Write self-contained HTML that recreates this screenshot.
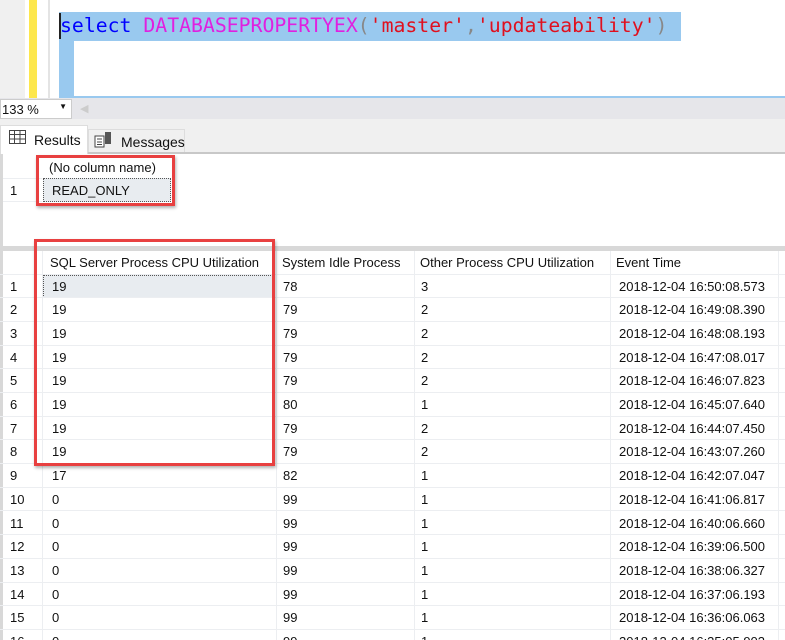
<!DOCTYPE html>
<html><head><style>
*{margin:0;padding:0;box-sizing:border-box}
html,body{width:785px;height:640px;overflow:hidden}
body{background:#fff;position:relative;font-family:"Liberation Sans",sans-serif;font-size:13px;color:#111}
.a{position:absolute}
.code{font-family:"DejaVu Sans Mono","Liberation Mono",monospace;font-size:19.8px;white-space:pre}
.row{position:absolute;left:0;width:785px;height:23.7px;border-bottom:1px solid #eceef1}
.c{position:absolute;top:4px;white-space:nowrap}
.vl{position:absolute;width:1px;background:#eceef1}
</style></head><body>
<div class="a" style="left:0;top:0;width:25px;height:98px;background:#f0f0f0"></div>
<div class="a" style="left:29px;top:0;width:8px;height:98px;background:#fde74c"></div>
<div class="a" style="left:48px;top:0;width:2px;height:98px;background:#e4e4e4"></div>
<div class="a" style="left:59px;top:12px;width:622px;height:29px;background:#99c9ef"></div>
<div class="a" style="left:59px;top:41px;width:15px;height:57px;background:#99c9ef"></div>
<div class="a" style="left:59px;top:96px;width:726px;height:2px;background:#99c9ef"></div>
<div class="a" style="left:59px;top:13px;width:2px;height:26px;background:#222"></div>
<div class="a code" style="left:60px;top:14px;color:#00f">select <span style="color:#e020e0">DATABASEPROPERTYEX</span><span style="color:#888">(</span><span style="color:#e0101e">'master'</span><span style="color:#888">,</span><span style="color:#e0101e">'updateability'</span><span style="color:#888">)</span></div>
<div class="a" style="left:0;top:98px;width:785px;height:21px;background:#e6e6ea"></div>
<div class="a" style="left:0;top:99px;width:72px;height:20px;background:#fff;border:1px solid #ccc;font-size:13px;padding:2px 0 0 1px">133 %<span style="position:absolute;right:4px;top:2px;font-size:8px">▼</span></div>
<div class="a" style="left:80px;top:102px;color:#ccc;font-size:11px">◀</div>
<div class="a" style="left:0;top:119px;width:785px;height:35px;background:#f0f0f0"></div>
<div class="a" style="left:0;top:152px;width:785px;height:2px;background:#c8c8c8"></div>
<div class="a" style="left:0;top:125px;width:88px;height:29px;background:#fff;border:1px solid #ddd;border-bottom:none"></div>
<svg class="a" style="left:9px;top:130px" width="17" height="14"><rect x="0.5" y="0.5" width="16" height="13" fill="#fff" stroke="#444"/><path d="M0 4.5H17M0 9H17M5.5 0V14M11 0V14" stroke="#444"/></svg>
<div class="a" style="left:34px;top:132px;font-size:14px">Results</div>
<div class="a" style="left:88px;top:129px;width:97px;height:23px;background:#f0f0f0;border:1px solid #ddd;border-bottom:none"></div>
<svg class="a" style="left:94px;top:131px" width="18" height="17"><rect x="1" y="5" width="9" height="11" fill="#fff" stroke="#444"/><path d="M3 8H8M3 11H8M3 13.5H8" stroke="#444"/><rect x="11" y="1" width="6" height="12" fill="#555"/></svg>
<div class="a" style="left:121px;top:134px;font-size:14px">Messages</div>
<div class="a" style="left:0;top:154px;width:785px;height:92px;background:#fff;border-left:3px solid #d8d8d8"></div>
<div class="a" style="left:3px;top:178px;width:39px;height:24px;border-top:1px solid #eceef1;border-bottom:1px solid #eceef1"></div>
<div class="a" style="left:10px;top:183px">1</div>
<div class="a" style="left:49px;top:160px">(No column name)</div>
<div class="a" style="left:43px;top:178px;width:128px;height:24px;background:#e8ecf0;border:1px dotted #555"></div>
<div class="a" style="left:52px;top:183px">READ_ONLY</div>
<div class="a" style="left:0;top:246px;width:785px;height:5px;background:#d8d8d8"></div>
<div class="a" style="left:0;top:251px;width:3px;height:389px;background:#d8d8d8"></div>
<div class="vl" style="left:42px;top:251px;height:389px"></div>
<div class="vl" style="left:276px;top:251px;height:389px"></div>
<div class="vl" style="left:414px;top:251px;height:389px"></div>
<div class="vl" style="left:610px;top:251px;height:389px"></div>
<div class="vl" style="left:778px;top:251px;height:389px"></div>
<div class="row" style="top:251px;height:23.5px">
<div class="c" style="left:50px">SQL Server Process CPU Utilization</div>
<div class="c" style="left:282px">System Idle Process</div>
<div class="c" style="left:420px">Other Process CPU Utilization</div>
<div class="c" style="left:616px">Event Time</div></div>
<div class="a" style="left:43px;top:275px;width:232px;height:23px;background:#e8ecf0;border:1px dotted #555"></div>
<div class="row" style="top:274.5px"><div class="c" style="left:10px">1</div><div class="c" style="left:52px">19</div><div class="c" style="left:283px">78</div><div class="c" style="left:421px">3</div><div class="c" style="left:619px">2018-12-04 16:50:08.573</div></div>
<div class="row" style="top:298.2px"><div class="c" style="left:10px">2</div><div class="c" style="left:52px">19</div><div class="c" style="left:283px">79</div><div class="c" style="left:421px">2</div><div class="c" style="left:619px">2018-12-04 16:49:08.390</div></div>
<div class="row" style="top:321.9px"><div class="c" style="left:10px">3</div><div class="c" style="left:52px">19</div><div class="c" style="left:283px">79</div><div class="c" style="left:421px">2</div><div class="c" style="left:619px">2018-12-04 16:48:08.193</div></div>
<div class="row" style="top:345.6px"><div class="c" style="left:10px">4</div><div class="c" style="left:52px">19</div><div class="c" style="left:283px">79</div><div class="c" style="left:421px">2</div><div class="c" style="left:619px">2018-12-04 16:47:08.017</div></div>
<div class="row" style="top:369.3px"><div class="c" style="left:10px">5</div><div class="c" style="left:52px">19</div><div class="c" style="left:283px">79</div><div class="c" style="left:421px">2</div><div class="c" style="left:619px">2018-12-04 16:46:07.823</div></div>
<div class="row" style="top:393px"><div class="c" style="left:10px">6</div><div class="c" style="left:52px">19</div><div class="c" style="left:283px">80</div><div class="c" style="left:421px">1</div><div class="c" style="left:619px">2018-12-04 16:45:07.640</div></div>
<div class="row" style="top:416.7px"><div class="c" style="left:10px">7</div><div class="c" style="left:52px">19</div><div class="c" style="left:283px">79</div><div class="c" style="left:421px">2</div><div class="c" style="left:619px">2018-12-04 16:44:07.450</div></div>
<div class="row" style="top:440.4px"><div class="c" style="left:10px">8</div><div class="c" style="left:52px">19</div><div class="c" style="left:283px">79</div><div class="c" style="left:421px">2</div><div class="c" style="left:619px">2018-12-04 16:43:07.260</div></div>
<div class="row" style="top:464.1px"><div class="c" style="left:10px">9</div><div class="c" style="left:52px">17</div><div class="c" style="left:283px">82</div><div class="c" style="left:421px">1</div><div class="c" style="left:619px">2018-12-04 16:42:07.047</div></div>
<div class="row" style="top:487.8px"><div class="c" style="left:10px">10</div><div class="c" style="left:52px">0</div><div class="c" style="left:283px">99</div><div class="c" style="left:421px">1</div><div class="c" style="left:619px">2018-12-04 16:41:06.817</div></div>
<div class="row" style="top:511.5px"><div class="c" style="left:10px">11</div><div class="c" style="left:52px">0</div><div class="c" style="left:283px">99</div><div class="c" style="left:421px">1</div><div class="c" style="left:619px">2018-12-04 16:40:06.660</div></div>
<div class="row" style="top:535.2px"><div class="c" style="left:10px">12</div><div class="c" style="left:52px">0</div><div class="c" style="left:283px">99</div><div class="c" style="left:421px">1</div><div class="c" style="left:619px">2018-12-04 16:39:06.500</div></div>
<div class="row" style="top:558.9px"><div class="c" style="left:10px">13</div><div class="c" style="left:52px">0</div><div class="c" style="left:283px">99</div><div class="c" style="left:421px">1</div><div class="c" style="left:619px">2018-12-04 16:38:06.327</div></div>
<div class="row" style="top:582.6px"><div class="c" style="left:10px">14</div><div class="c" style="left:52px">0</div><div class="c" style="left:283px">99</div><div class="c" style="left:421px">1</div><div class="c" style="left:619px">2018-12-04 16:37:06.193</div></div>
<div class="row" style="top:606.3px"><div class="c" style="left:10px">15</div><div class="c" style="left:52px">0</div><div class="c" style="left:283px">99</div><div class="c" style="left:421px">1</div><div class="c" style="left:619px">2018-12-04 16:36:06.063</div></div>
<div class="row" style="top:630px;height:10px;border:none"><div class="c" style="left:10px">16</div><div class="c" style="left:52px">0</div><div class="c" style="left:283px">99</div><div class="c" style="left:421px">1</div><div class="c" style="left:619px">2018-12-04 16:35:05.903</div></div>
<div class="a" style="left:36px;top:155px;width:139px;height:51px;border:3px solid #e84040;box-shadow:1px 2px 3px rgba(0,0,0,.3)"></div>
<div class="a" style="left:34px;top:239px;width:241px;height:227px;border:3px solid #e84040;box-shadow:1px 2px 3px rgba(0,0,0,.3)"></div>
</body></html>
